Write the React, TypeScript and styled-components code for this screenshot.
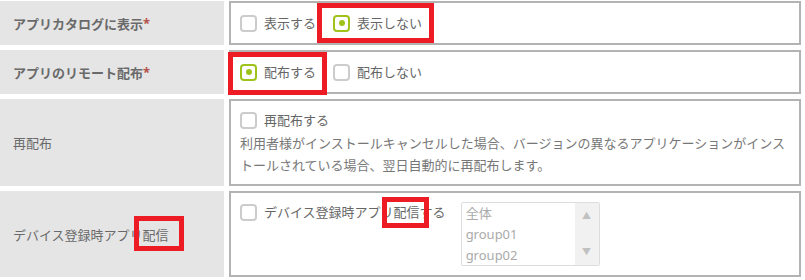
import React from "react";
import styled, { createGlobalStyle } from "styled-components";

const GlobalStyle = createGlobalStyle`
  body {
    margin: 0;
    background: #ffffff;
    font-family: "Noto Sans", "Noto Sans CJK JP", sans-serif;
  }
`;

const Page = styled.div`
  position: relative;
  width: 805px;
  height: 280px;
  overflow: hidden;
`;

const Form = styled.div`
  display: grid;
  grid-template-columns: 224px 572px;
  grid-auto-rows: auto;
  column-gap: 5px;
  row-gap: 5px;
  padding-top: 1px;
`;

const LabelCell = styled.div<{ $bold?: boolean; $height: number }>`
  display: flex;
  align-items: center;
  height: ${(p) => p.$height}px;
  padding-left: 13px;
  box-sizing: border-box;
  background: #e5e5e5;
  font-size: 13px;
  font-weight: ${(p) => (p.$bold ? 700 : 400)};
  color: #6a6a6a;
`;

const Required = styled.span`
  color: #b5504a;
`;

const ValueCell = styled.div<{ $height: number }>`
  height: ${(p) => p.$height}px;
  box-sizing: border-box;
  border: 2px solid #b3b3b3;
  padding: 0 9px;
  font-size: 13px;
  color: #666;
`;

const OptionRow = styled.div`
  display: flex;
  align-items: center;
  height: 100%;
  gap: 17px;
`;

const Option = styled.label`
  display: flex;
  align-items: center;
  gap: 7px;
  line-height: 20px;
  white-space: nowrap;
`;

const Box = styled.span<{ $on?: boolean }>`
  position: relative;
  display: inline-block;
  width: 17px;
  height: 17px;
  box-sizing: border-box;
  border: 2px solid ${(p) => (p.$on ? "#9fc31a" : "#cccccc")};
  border-radius: 4px;
  background: #fff;

  &::after {
    content: "";
    display: ${(p) => (p.$on ? "block" : "none")};
    position: absolute;
    left: 3.5px;
    top: 3.5px;
    width: 6px;
    height: 6px;
    border-radius: 50%;
    background: #9fc31a;
  }
`;

const Stack = styled.div`
  padding-top: 9px;
`;

const Note = styled.p`
  margin: 2px 0 0;
  font-size: 13px;
  line-height: 22px;
  color: #777;
`;

const DeliveryRow = styled.div`
  display: flex;
  align-items: flex-start;
  gap: 15px;
  padding-top: 9px;
`;

const ListBox = styled.div`
  display: flex;
  width: 139px;
  height: 64px;
  box-sizing: border-box;
  border: 1px solid #dddddd;
  border-radius: 2px;
`;

const ListItems = styled.div`
  flex: 1;
  padding: 0 4px;
  font-size: 13px;
  line-height: 21px;
  color: #aaaaaa;
`;

const ScrollTrack = styled.div`
  display: flex;
  flex-direction: column;
  justify-content: space-between;
  align-items: center;
  width: 24px;
  padding: 8px 0;
  box-sizing: border-box;
  background: #f1f1f1;
  color: #c1c1c1;
  font-size: 9px;
  line-height: 10px;
`;

const Marker = styled.div`
  position: absolute;
  box-sizing: border-box;
  border: 5px solid #ed1c24;
  pointer-events: none;
`;

export default function App() {
  return (
    <Page>
      <GlobalStyle />
      <Form>
        <LabelCell $bold $height={44}>
          アプリカタログに表示<Required>*</Required>
        </LabelCell>
        <ValueCell $height={44}>
          <OptionRow>
            <Option>
              <Box />
              表示する
            </Option>
            <Option>
              <Box $on />
              表示しない
            </Option>
          </OptionRow>
        </ValueCell>

        <LabelCell $bold $height={44}>
          アプリのリモート配布<Required>*</Required>
        </LabelCell>
        <ValueCell $height={44}>
          <OptionRow>
            <Option>
              <Box $on />
              配布する
            </Option>
            <Option>
              <Box />
              配布しない
            </Option>
          </OptionRow>
        </ValueCell>

        <LabelCell $height={87}>再配布</LabelCell>
        <ValueCell $height={87}>
          <Stack>
            <Option>
              <Box />
              再配布する
            </Option>
            <Note>
              利用者様がインストールキャンセルした場合、バージョンの異なるアプリケーションがインストールされている場合、翌日自動的に再配布します。
            </Note>
          </Stack>
        </ValueCell>

        <LabelCell $height={86}>デバイス登録時アプリ配信</LabelCell>
        <ValueCell $height={86}>
          <DeliveryRow>
            <Option>
              <Box />
              デバイス登録時アプリ配信する
            </Option>
            <ListBox>
              <ListItems>
                <div>全体</div>
                <div>group01</div>
                <div>group02</div>
              </ListItems>
              <ScrollTrack>
                <span>▲</span>
                <span>▼</span>
              </ScrollTrack>
            </ListBox>
          </DeliveryRow>
        </ValueCell>
      </Form>

      <Marker style={{ left: 317, top: 3, width: 117, height: 40 }} />
      <Marker style={{ left: 228, top: 52, width: 99, height: 43 }} />
      <Marker style={{ left: 134, top: 216, width: 50, height: 35 }} />
      <Marker style={{ left: 382, top: 197, width: 47, height: 31 }} />
    </Page>
  );
}
